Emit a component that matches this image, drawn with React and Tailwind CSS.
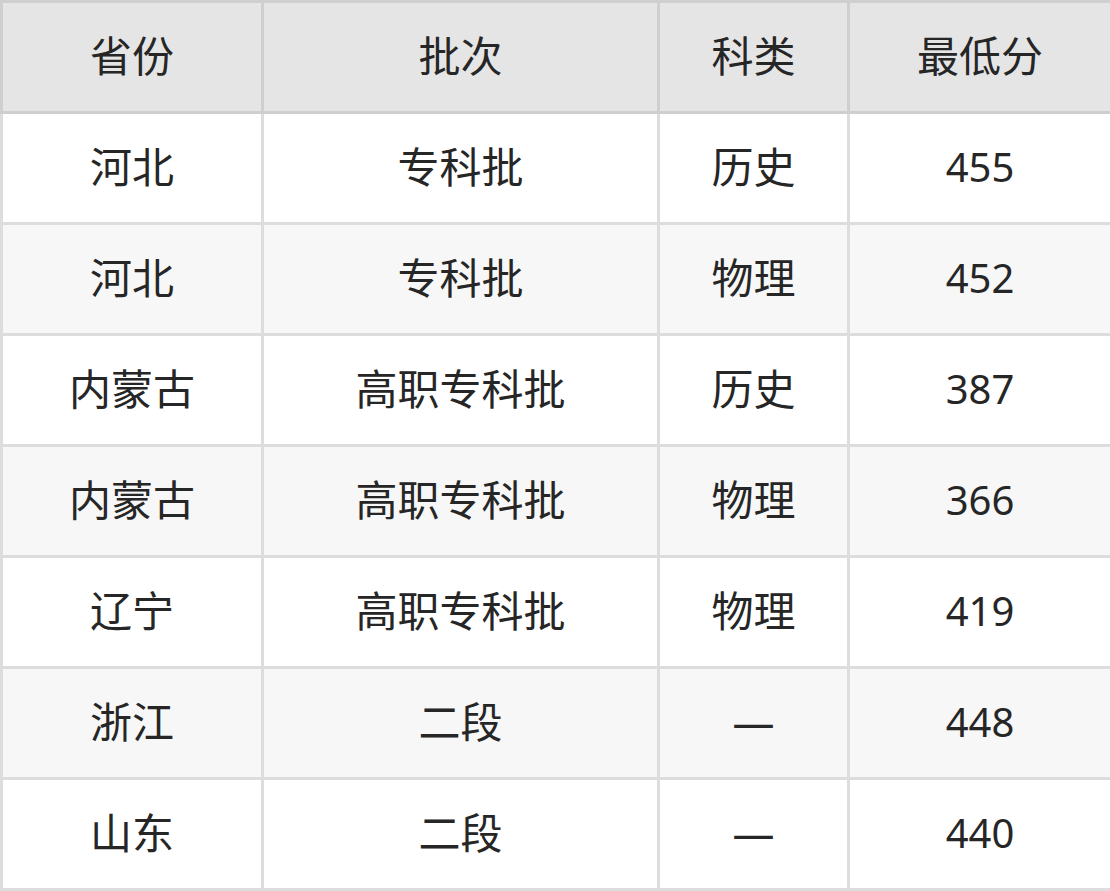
const rows = [
  ['河北', '专科批', '历史', '455'],
  ['河北', '专科批', '物理', '452'],
  ['内蒙古', '高职专科批', '历史', '387'],
  ['内蒙古', '高职专科批', '物理', '366'],
  ['辽宁', '高职专科批', '物理', '419'],
  ['浙江', '二段', '—', '448'],
  ['山东', '二段', '—', '440'],
]

const headers = ['省份', '批次', '科类', '最低分']

export default function App() {
  return (
    <div className="w-[1110px] h-[891px] bg-white" style={{ fontFamily: '"Noto Sans", "Noto Sans CJK SC", sans-serif' }}>
      <table className="w-[1110px] table-fixed border-collapse text-[42px] text-[#262626]">
        <colgroup>
          <col className="w-[261px]" />
          <col className="w-[396px]" />
          <col className="w-[190px]" />
          <col className="w-[263px]" />
        </colgroup>
        <thead>
          <tr className="bg-[#e5e5e5]">
            {headers.map((h) => (
              <th key={h} className="h-[111px] p-0 pb-[3px] border-[3px] border-[#cfcfcf] font-normal text-center align-middle">
                {h}
              </th>
            ))}
          </tr>
        </thead>
        <tbody>
          {rows.map((r, i) => (
            <tr key={i} className={i % 2 === 0 ? 'bg-white' : 'bg-[#f7f7f7]'}>
              {r.map((c, j) => (
                <td
                  key={j}
                  className={`h-[111px] p-0 pb-[3px] border-[3px] border-[#dddddd] text-center align-middle ${j === 3 ? 'text-[40px]' : ''}`}
                >
                  {c}
                </td>
              ))}
            </tr>
          ))}
        </tbody>
      </table>
    </div>
  )
}
